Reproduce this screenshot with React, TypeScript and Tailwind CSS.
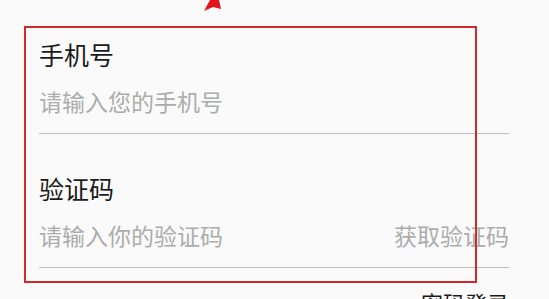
import React from 'react';

const font = { fontFamily: '"Noto Sans CJK SC", "Noto Sans", sans-serif' };

function Field({ label, placeholder, action }: { label: string; placeholder: string; action?: string }) {
  return (
    <div className="flex flex-col">
      <div className="text-[25px] leading-[25px] text-[#1a1a1a]">{label}</div>
      <div className="mt-[23px] flex items-center justify-between pb-[20px] border-b border-[#bfbfbf]">
        <span className="text-[23px] leading-[23px] text-[#acacac]">{placeholder}</span>
        {action && <span className="text-[23px] leading-[23px] text-[#acacac]">{action}</span>}
      </div>
    </div>
  );
}

export default function App() {
  return (
    <div className="relative w-[549px] h-[299px] overflow-hidden bg-[#fafafa]" style={font}>
      {/* annotation arrow */}
      <svg className="absolute left-[200px] top-0" width="26" height="14" viewBox="0 0 26 14">
        <polygon points="4,11 10,0 19,0 21,9 13,7" fill="#e3121b" />
      </svg>

      <div className="flex flex-col pl-[39px] pt-[42px] w-[509px]">
        <Field label="手机号" placeholder="请输入您的手机号" />
        <div className="mt-[42px]">
          <Field label="验证码" placeholder="请输入你的验证码" action="获取验证码" />
        </div>
        <div className="mt-[23px] self-end text-[22px] leading-[22px] text-[#1a1a1a]">密码登录</div>
      </div>

      {/* red highlight box */}
      <div className="absolute left-[24px] top-[26px] w-[453px] h-[257px] border-2 border-[#cf2b2b] pointer-events-none" />
    </div>
  );
}
